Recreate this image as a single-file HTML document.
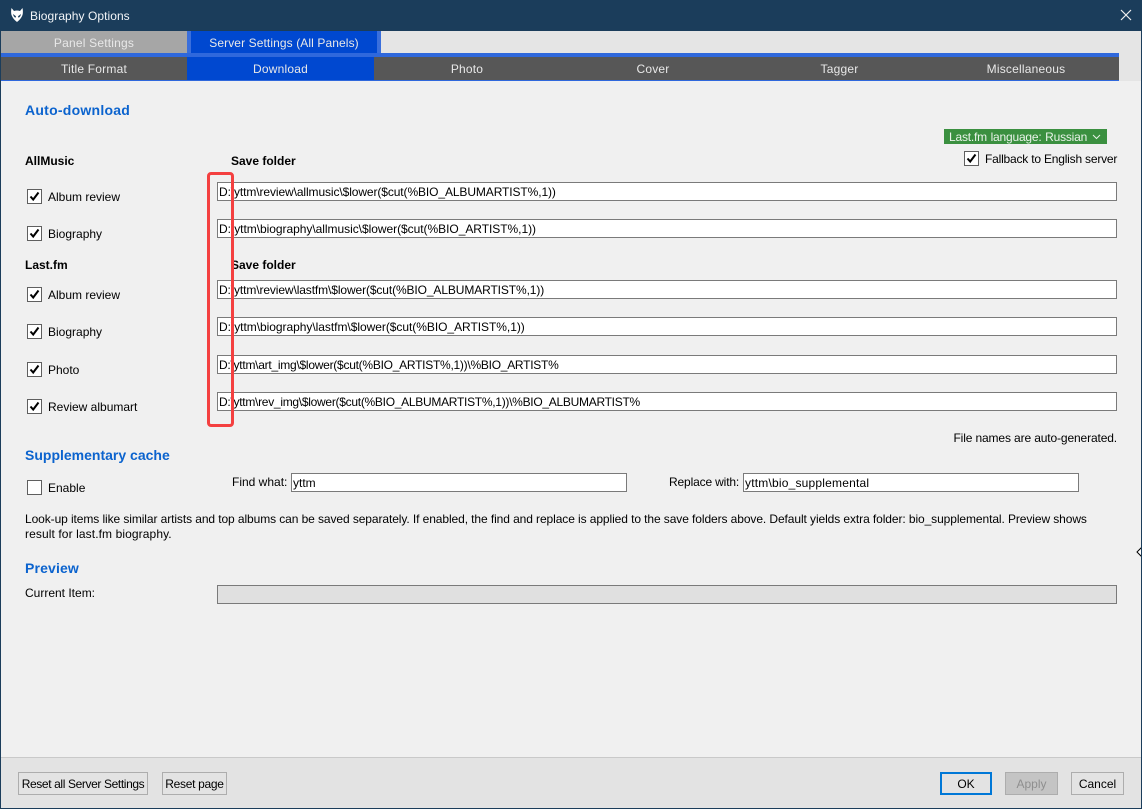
<!DOCTYPE html>
<html><head><meta charset="utf-8"><style>
html,body{margin:0;padding:0;width:1142px;height:809px;overflow:hidden;background:#f0f0f0}
body{position:relative;font-family:"Liberation Sans",sans-serif;font-size:12px;color:#000}
.a{position:absolute}
.t{position:absolute;white-space:nowrap;line-height:16px;height:16px}
.tab{position:absolute;text-align:center;color:#e8e8e8;font-size:12px;line-height:25px;height:23px;white-space:nowrap;letter-spacing:.2px}
.in{position:absolute;left:217px;width:898px;height:17px;background:#fff;border:1px solid #7a7a7a;line-height:19px;white-space:nowrap;text-indent:1px;overflow:hidden}
.cb{position:absolute;left:27px;width:13px;height:13px;background:#fff;border:1px solid #5f5f5f}
.cb svg{position:absolute;left:0;top:0}
.h{position:absolute;color:#0b63ce;font-weight:bold;font-size:14px;line-height:18px;white-space:nowrap;letter-spacing:.25px}
.b{font-weight:bold}
.btn{position:absolute;box-sizing:border-box;height:23px;background:#e3e3e3;border:1px solid #adadad;text-align:center;line-height:22px;white-space:nowrap}
</style></head><body>
<div class="a" style="left:0;top:0;width:1142px;height:31px;background:#1b3d5b"></div>
<svg class="a" style="left:11px;top:8px" width="12" height="14" viewBox="0 0 12 14"><path d="M0.5 0 L3 3 Q6 2 9 3 L11.5 0 Q12.3 4 11.5 7 Q10 11 6 14 Q2 11 0.5 7 Q-0.3 4 0.5 0Z" fill="#fff"/><path d="M2 6 L5 8.3 L4.5 9.8 Q2.6 9 2 6Z M10 6 L7 8.3 L7.5 9.8 Q9.4 9 10 6Z" fill="#1b3d5b"/></svg>
<div class="t" style="left:30px;top:8px;color:#f2f5f8;letter-spacing:.06px">Biography Options</div>
<svg class="a" style="left:1120px;top:9px" width="12" height="12" viewBox="0 0 12 12"><path d="M1 1 L11 11 M11 1 L1 11" stroke="#f0f0f0" stroke-width="1.2"/></svg>

<div class="a" style="left:1px;top:31px;width:1140px;height:50px;background:#e5e5e5"></div>
<div class="tab" style="left:1px;top:31px;width:186px;height:22px;background:#a6a6a6">Panel Settings</div>
<div class="a" style="left:187px;top:31px;width:194px;height:22px;background:#3a6fdc"></div>
<div class="tab" style="left:191px;top:31px;width:186px;height:22px;background:#0048d0;letter-spacing:.1px">Server Settings (All Panels)</div>
<div class="a" style="left:1px;top:53px;width:1118px;height:4px;background:#2f68dc"></div>
<div class="a" style="left:1px;top:57px;width:1118px;height:23px;background:#575757"></div>
<div class="a" style="left:1px;top:80px;width:1118px;height:1px;background:#2f68dc"></div>
<div class="tab" style="left:1px;top:57px;width:186px">Title Format</div>
<div class="tab" style="left:187px;top:57px;width:187px;background:#0048d0">Download</div>
<div class="tab" style="left:374px;top:57px;width:186px">Photo</div>
<div class="tab" style="left:560px;top:57px;width:186px">Cover</div>
<div class="tab" style="left:746px;top:57px;width:187px">Tagger</div>
<div class="tab" style="left:933px;top:57px;width:186px">Miscellaneous</div>

<div class="h" style="left:25px;top:101px">Auto-download</div>

<div class="a" style="left:944px;top:129px;width:163px;height:15px;background:#3b9040"></div>
<div class="t" style="left:949px;top:129px;color:#e9f3e9;height:15px;line-height:16px;letter-spacing:-.2px;word-spacing:.5px">Last.fm language: Russian</div>
<svg class="a" style="left:1092px;top:134px" width="9" height="6" viewBox="0 0 9 6"><path d="M1 1 L4.5 4.5 L8 1" fill="none" stroke="#e9f3e9" stroke-width="1"/></svg>
<div class="cb" style="left:964px;top:151px"><svg width="13" height="13" viewBox="0 0 13 13"><path d="M2.5 6.5 L5.2 9.5 L10.5 2.5" fill="none" stroke="#000" stroke-width="2"/></svg></div>
<div class="t" style="left:985px;top:151px;letter-spacing:-.2px">Fallback to English server</div>

<div class="t b" style="left:25px;top:153px">AllMusic</div>
<div class="t b" style="left:231px;top:153px">Save folder</div>

<div class="cb" style="top:189px"><svg width="13" height="13" viewBox="0 0 13 13"><path d="M2.5 6.5 L5.2 9.5 L10.5 2.5" fill="none" stroke="#000" stroke-width="2"/></svg></div>
<div class="t" style="left:48px;top:189px">Album review</div>
<div class="cb" style="top:226px"><svg width="13" height="13" viewBox="0 0 13 13"><path d="M2.5 6.5 L5.2 9.5 L10.5 2.5" fill="none" stroke="#000" stroke-width="2"/></svg></div>
<div class="t" style="left:48px;top:226px">Biography</div>
<div class="t b" style="left:25px;top:257px">Last.fm</div>
<div class="t b" style="left:231px;top:257px">Save folder</div>
<div class="cb" style="top:287px"><svg width="13" height="13" viewBox="0 0 13 13"><path d="M2.5 6.5 L5.2 9.5 L10.5 2.5" fill="none" stroke="#000" stroke-width="2"/></svg></div>
<div class="t" style="left:48px;top:287px">Album review</div>
<div class="cb" style="top:324px"><svg width="13" height="13" viewBox="0 0 13 13"><path d="M2.5 6.5 L5.2 9.5 L10.5 2.5" fill="none" stroke="#000" stroke-width="2"/></svg></div>
<div class="t" style="left:48px;top:324px">Biography</div>
<div class="cb" style="top:362px"><svg width="13" height="13" viewBox="0 0 13 13"><path d="M2.5 6.5 L5.2 9.5 L10.5 2.5" fill="none" stroke="#000" stroke-width="2"/></svg></div>
<div class="t" style="left:48px;top:362px">Photo</div>
<div class="cb" style="top:399px"><svg width="13" height="13" viewBox="0 0 13 13"><path d="M2.5 6.5 L5.2 9.5 L10.5 2.5" fill="none" stroke="#000" stroke-width="2"/></svg></div>
<div class="t" style="left:48px;top:399px">Review albumart</div>

<div class="in" style="top:182px;letter-spacing:-.1px">D:\yttm\review\allmusic\$lower($cut(%BIO_ALBUMARTIST%,1))</div>
<div class="in" style="top:219px;letter-spacing:-.04px">D:\yttm\biography\allmusic\$lower($cut(%BIO_ARTIST%,1))</div>
<div class="in" style="top:280px;letter-spacing:-.11px">D:\yttm\review\lastfm\$lower($cut(%BIO_ALBUMARTIST%,1))</div>
<div class="in" style="top:317px;letter-spacing:-.04px">D:\yttm\biography\lastfm\$lower($cut(%BIO_ARTIST%,1))</div>
<div class="in" style="top:355px;letter-spacing:-.26px">D:\yttm\art_img\$lower($cut(%BIO_ARTIST%,1))\%BIO_ARTIST%</div>
<div class="in" style="top:392px;letter-spacing:-.28px">D:\yttm\rev_img\$lower($cut(%BIO_ALBUMARTIST%,1))\%BIO_ALBUMARTIST%</div>

<div class="a" style="left:207px;top:172px;width:21px;height:249px;border:3.5px solid #f44040;border-radius:4px"></div>

<div class="t" style="right:25px;top:430px;letter-spacing:-.13px">File names are auto-generated.</div>
<div class="h" style="left:25px;top:446px;letter-spacing:0">Supplementary cache</div>
<div class="cb" style="top:480px"></div>
<div class="t" style="left:48px;top:480px">Enable</div>
<div class="t" style="left:232px;top:474px">Find what:</div>
<div class="in" style="left:291px;top:473px;width:334px">yttm</div>
<div class="t" style="left:669px;top:474px;letter-spacing:-.15px">Replace with:</div>
<div class="in" style="left:743px;top:473px;width:334px;letter-spacing:.2px">yttm\bio_supplemental</div>
<div class="t" style="left:25px;top:511px;letter-spacing:-.09px">Look-up items like similar artists and top albums can be saved separately. If enabled, the find and replace is applied to the save folders above. Default yields extra folder: bio_supplemental. Preview shows</div>
<div class="t" style="left:25px;top:526px;letter-spacing:.1px">result for last.fm biography.</div>
<div class="h" style="left:25px;top:559px;letter-spacing:.15px">Preview</div>
<div class="t" style="left:25px;top:585px">Current Item:</div>
<div class="a" style="left:217px;top:585px;width:898px;height:17px;background:#e0e0e0;border:1px solid #7a7a7a"></div>

<svg class="a" style="left:1136px;top:546px" width="6" height="12" viewBox="0 0 6 12"><path d="M6 1 L1 6 L6 11Z" fill="#fff" stroke="#000" stroke-width="1"/></svg>

<div class="a" style="left:1px;top:757px;width:1140px;height:51px;background:#e3e3e3;border-top:1px solid #c9c9c9;box-sizing:border-box"></div>
<div class="btn" style="left:18px;top:772px;width:130px;letter-spacing:-.38px">Reset all Server Settings</div>
<div class="btn" style="left:162px;top:772px;width:65px;letter-spacing:-.3px">Reset page</div>
<div class="btn" style="left:940px;top:772px;width:52px;border:2px solid #0078d7;line-height:20px">OK</div>
<div class="btn" style="left:1005px;top:772px;width:53px;background:#c4c4c4;color:#8f8f8f">Apply</div>
<div class="btn" style="left:1071px;top:772px;width:53px">Cancel</div>

<div class="a" style="left:0;top:31px;width:1px;height:778px;background:#1b3d5b"></div>
<div class="a" style="left:1141px;top:31px;width:1px;height:778px;background:#1b3d5b"></div>
<div class="a" style="left:0;top:808px;width:1142px;height:1px;background:#1b3d5b"></div>
</body></html>
